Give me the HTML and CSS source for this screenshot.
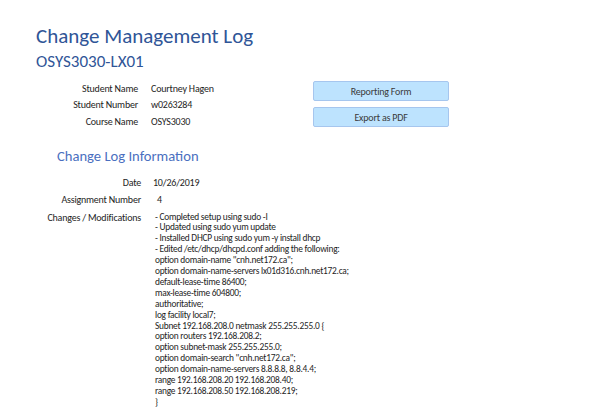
FILE: index.html
```html
<!DOCTYPE html>
<html>
<head>
<meta charset="utf-8">
<link rel="stylesheet" href="styles.css">
</head>
<body>
<div class="page">
  <h1 class="title">Change Management Log</h1>
  <h2 class="subtitle">OSYS3030-LX01</h2>
  <div class="info">
    <div class="fields">
      <div class="label">Student Name</div><div class="value">Courtney Hagen</div>
      <div class="label">Student Number</div><div class="value">w0263284</div>
      <div class="label">Course Name</div><div class="value">OSYS3030</div>
    </div>
    <div class="buttons">
      <button class="btn">Reporting Form</button>
      <button class="btn">Export as PDF</button>
    </div>
  </div>
  <h3 class="section">Change Log Information</h3>
  <div class="log">
    <div class="label">Date</div><div class="value">10/26/2019</div>
    <div class="label">Assignment Number</div><div class="value num">4</div>
    <div class="label">Changes / Modifications</div>
    <div class="value changes">- Completed setup using sudo -I
- Updated using sudo yum update
- Installed DHCP using sudo yum -y install dhcp
- Edited /etc/dhcp/dhcpd.conf adding the following:
option domain-name "cnh.net172.ca";
option domain-name-servers lx01d316.cnh.net172.ca;
default-lease-time 86400;
max-lease-time 604800;
authoritative;
log facility local7;
Subnet 192.168.208.0 netmask 255.255.255.0 {
option routers 192.168.208.2;
option subnet-mask 255.255.255.0;
option domain-search "cnh.net172.ca";
option domain-name-servers 8.8.8.8, 8.8.4.4;
range 192.168.208.20 192.168.208.40;
range 192.168.208.50 192.168.208.219;
}</div>
  </div>
</div>
</body>
</html>
```
FILE: styles.css
```css
html, body {
  margin: 0;
  background: #ffffff;
}
body {
  font-family: Carlito, Lato, "Open Sans", sans-serif;
  color: #1e1e1e;
}
.page {
  padding: 24px 0 0 36px;
}
.title {
  margin: 0;
  font-weight: 300;
  font-size: 21px;
  line-height: 24px;
  color: #2f5597;
}
.subtitle {
  margin: 4px 0 0;
  font-weight: 300;
  font-size: 17px;
  line-height: 20px;
  color: #2f5597;
}
.info {
  display: flex;
  margin: 8px 0 0 -36px;
}
.fields {
  width: 313px;
  display: grid;
  grid-template-columns: 138px 1fr;
  column-gap: 13px;
  grid-auto-rows: 16.5px;
  align-items: center;
  font-size: 10px;
  letter-spacing: -0.2px;
}
.label {
  text-align: right;
}
.buttons {
  display: flex;
  flex-direction: column;
  gap: 6px;
  padding-top: 1px;
}
.btn {
  width: 136px;
  height: 20px;
  background: #bde3fe;
  border: 1px solid #a6c6ee;
  border-radius: 2px;
  font-family: inherit;
  font-size: 10px;
  letter-spacing: -0.2px;
  color: #3a3a3a;
  padding: 0;
}
.section {
  margin: 17px 0 0 21px;
  font-weight: 400;
  font-size: 14.6px;
  line-height: 18px;
  color: #4a6fc0;
}
.log {
  margin: 9px 0 0 -36px;
  display: grid;
  grid-template-columns: 141px 1fr;
  column-gap: 12px;
  grid-auto-rows: minmax(17.5px, auto);
  font-size: 10px;
  letter-spacing: -0.2px;
  line-height: 17.5px;
}
.num {
  padding-left: 4px;
}
.changes {
  white-space: pre;
  padding-left: 2px;
  line-height: 10.9px;
  padding-top: 3px;
  font-size: 9.4px;
  letter-spacing: -0.25px;
}
```
